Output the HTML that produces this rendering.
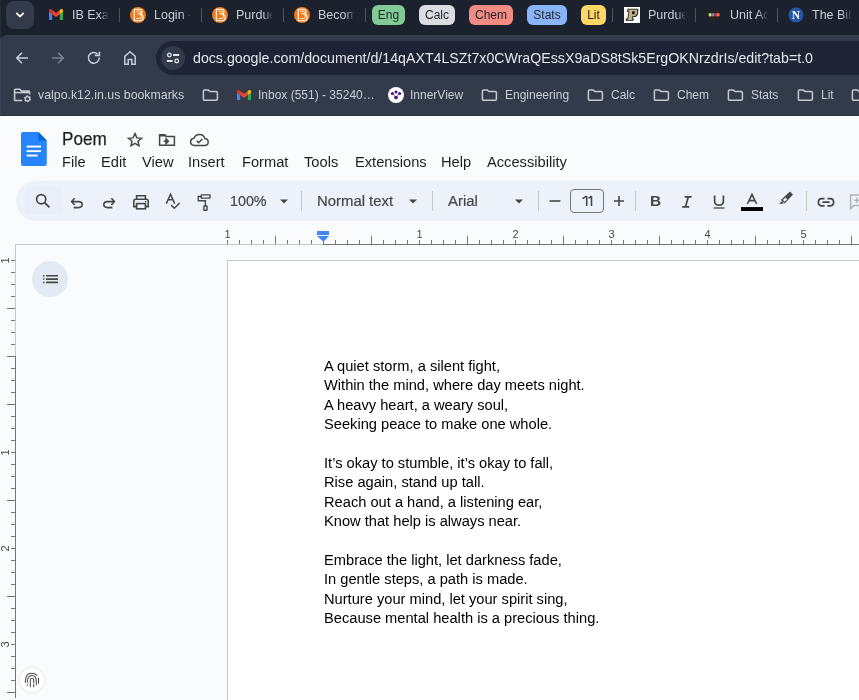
<!DOCTYPE html>
<html><head><meta charset="utf-8">
<style>
*{margin:0;padding:0;box-sizing:border-box}
html,body{width:859px;height:700px;overflow:hidden;background:#f9fbfd;font-family:"Liberation Sans",sans-serif}
.a{position:absolute}
#root{position:absolute;left:0;top:0;width:859px;height:700px;will-change:transform}
.tt{position:absolute;top:7px;height:18px;font-size:12.5px;color:#c9cdd6;white-space:nowrap;overflow:hidden;line-height:16px;
 -webkit-mask-image:linear-gradient(to right,#000 74%,transparent 100%)}
.sep{position:absolute;top:8px;width:1px;height:14px;background:#4b5262}
.chip{position:absolute;top:5px;height:20px;border-radius:6px;font-size:12px;line-height:20px;color:#1f232b;text-align:center}
.bm{position:absolute;top:88px;font-size:12px;color:#c9cdd6;white-space:nowrap;line-height:14px}
.menu{position:absolute;top:154px;font-size:14.67px;color:#1f1f1f;white-space:nowrap;line-height:17px}
.pl{position:absolute;left:324px;font-size:14.67px;color:#000;white-space:nowrap;line-height:19.38px}
.ic{position:absolute}
</style></head><body><div id="root">

<div class="a" style="left:0;top:0;width:859px;height:44px;background:#1b212d"></div>
<div class="a" style="left:0;top:0;width:1px;height:38px;background:#262c38;z-index:1"></div>
<div class="a" style="left:0;top:38px;width:1px;height:77px;background:#3a4150;z-index:1"></div>
<div class="a" style="left:0;top:35px;width:859px;height:81px;background:#333a4a;border-top-left-radius:7px"></div>
<div class="a" style="left:0;top:115px;width:859px;height:1px;background:#2d323e"></div>
<div class="a" style="left:0;top:116px;width:859px;height:1px;background:#ffffff"></div>
<div class="a" style="left:6px;top:1px;width:28px;height:28px;border-radius:8px;background:#333a4a"></div>
<svg class="ic" style="left:14px;top:9px" width="12" height="12" viewBox="0 0 12 12"><path d="M2.3 3.9 L6 7.6 L9.7 3.9" stroke="#fff" stroke-width="1.7" fill="none"/></svg>
<svg class="ic" style="left:49px;top:9px" width="14" height="11" viewBox="0 0 256 193" preserveAspectRatio="none">
<path fill="#4285f4" d="M58.182 192.05V93.14L27.507 65.077 0 49.504v125.091c0 9.658 7.825 17.455 17.455 17.455z"/>
<path fill="#34a853" d="M197.818 192.05h40.727c9.659 0 17.455-7.826 17.455-17.455V49.505l-31.156 17.837-27.026 25.798z"/>
<path fill="#ea4335" d="m58.182 93.14-4.174-38.647 4.174-36.989L128 69.868l69.818-52.364 4.669 34.992-4.669 40.644L128 145.504z"/>
<path fill="#fbbc04" d="M197.818 17.504V93.14L256 49.504V26.231c0-21.585-24.64-33.89-41.89-20.945z"/>
<path fill="#d93025" d="M0 49.504l26.759 20.07L58.182 93.14V17.504L41.89 5.286C24.61-7.66 0 4.646 0 26.23z"/>
</svg>
<svg class="ic" style="left:130px;top:7px" width="16" height="16" viewBox="0 0 16 16">
<circle cx="8" cy="8" r="8" fill="#f27a16"/>
<path d="M4.3 2.2 H9.8 Q12.1 2.2 12.1 4.6 Q12.1 6.4 10.8 7.2 Q13.2 8 13.2 10.6 Q13.2 13.7 10 13.7 H4.3 Z" fill="none" stroke="#fff" stroke-width="1.1"/>
<path d="M6.4 4.2 H9.3 Q10.5 4.2 10.5 5.3 Q10.5 6.5 9.1 6.8 M7.2 6.8 H9.6 Q11.4 7 11.4 9.2 Q11.4 11.6 9.6 11.6 H6.4" fill="none" stroke="#fff" stroke-width="0.9"/>
</svg>
<svg class="ic" style="left:212px;top:7px" width="16" height="16" viewBox="0 0 16 16">
<circle cx="8" cy="8" r="8" fill="#f27a16"/>
<path d="M4.3 2.2 H9.8 Q12.1 2.2 12.1 4.6 Q12.1 6.4 10.8 7.2 Q13.2 8 13.2 10.6 Q13.2 13.7 10 13.7 H4.3 Z" fill="none" stroke="#fff" stroke-width="1.1"/>
<path d="M6.4 4.2 H9.3 Q10.5 4.2 10.5 5.3 Q10.5 6.5 9.1 6.8 M7.2 6.8 H9.6 Q11.4 7 11.4 9.2 Q11.4 11.6 9.6 11.6 H6.4" fill="none" stroke="#fff" stroke-width="0.9"/>
</svg>
<svg class="ic" style="left:294px;top:7px" width="16" height="16" viewBox="0 0 16 16">
<circle cx="8" cy="8" r="8" fill="#f27a16"/>
<path d="M4.3 2.2 H9.8 Q12.1 2.2 12.1 4.6 Q12.1 6.4 10.8 7.2 Q13.2 8 13.2 10.6 Q13.2 13.7 10 13.7 H4.3 Z" fill="none" stroke="#fff" stroke-width="1.1"/>
<path d="M6.4 4.2 H9.3 Q10.5 4.2 10.5 5.3 Q10.5 6.5 9.1 6.8 M7.2 6.8 H9.6 Q11.4 7 11.4 9.2 Q11.4 11.6 9.6 11.6 H6.4" fill="none" stroke="#fff" stroke-width="0.9"/>
</svg>
<div class="tt" style="left:72px;width:37px">IB Exam Prep</div>
<div class="tt" style="left:154px;width:37px">Login - Brightspace</div>
<div class="tt" style="left:236px;width:37px">Purdue Brightspace</div>
<div class="tt" style="left:318px;width:37px">Become a Leader</div>
<div class="sep" style="left:119px"></div>
<div class="sep" style="left:201px"></div>
<div class="sep" style="left:283px"></div>
<div class="sep" style="left:365px"></div>
<div class="chip" style="left:372px;width:33px;background:#81c995">Eng</div>
<div class="chip" style="left:419px;width:36px;background:#dadce0">Calc</div>
<div class="chip" style="left:469px;width:44px;background:#f28b82">Chem</div>
<div class="chip" style="left:527px;width:40px;background:#8ab4f8">Stats</div>
<div class="chip" style="left:581px;width:25px;background:#fdd663">Lit</div>
<div class="sep" style="left:612px"></div>
<svg class="ic" style="left:624px;top:7px" width="16" height="16" viewBox="0 0 16 16">
<rect width="16" height="16" fill="#fff"/>
<path d="M3.6 1.8 H13.2 Q14.6 1.8 14.4 3.6 L13.8 7 Q13.4 9.8 10.6 10 H9 L8.6 11.6 H9.8 L9.4 13.8 H1.6 L2 11.6 H3.4 L4.6 5 H3 Z" fill="#111"/>
<path d="M4.4 2.6 H12.6 Q13.6 2.6 13.4 3.8 L13 6.6 Q12.6 9 10.2 9.2 H8.4 L7.8 12.4 H8.8 L8.6 13 H2.6 L2.8 12.4 H4 L5.4 4.4 H4.2 Z" fill="#c4b285"/>
<path d="M8.4 4.2 H10.8 L10.4 7.2 H7.9 Z" fill="#111"/>
</svg>
<div class="tt" style="left:648px;width:38px">Purdue</div>
<div class="sep" style="left:695px"></div>
<svg class="ic" style="left:706px;top:7px" width="16" height="16" viewBox="0 0 16 16">
<circle cx="8" cy="8" r="6" fill="#2a2220"/>
<rect x="2.7" y="6.3" width="2.7" height="3" fill="#d6f23a"/>
<rect x="5.4" y="6.3" width="2.7" height="3" fill="#27a9e6"/>
<rect x="8.1" y="6.3" width="2.7" height="3" fill="#ee1777"/>
<rect x="10.8" y="6.3" width="2.6" height="3" fill="#fb8b2b"/>
</svg>
<div class="tt" style="left:730px;width:38px">Unit Activity</div>
<div class="sep" style="left:777px"></div>
<svg class="ic" style="left:788px;top:7px" width="16" height="16" viewBox="0 0 16 16">
<circle cx="8" cy="8" r="7.6" fill="#2356a6"/>
<text x="8" y="12.1" font-family="Liberation Serif" font-weight="bold" font-size="11.5" fill="#fff" text-anchor="middle">N</text>
</svg>
<div class="tt" style="left:812px;width:40px">The Bible</div>
<svg class="ic" style="left:14px;top:50px" width="16" height="16" viewBox="0 0 16 16">
<path d="M14 8 H3.4 M8 2.8 L2.8 8 L8 13.2" stroke="#c3ccdd" stroke-width="1.6" fill="none"/></svg>
<svg class="ic" style="left:50px;top:50px" width="16" height="16" viewBox="0 0 16 16">
<path d="M2 8 H12.6 M8 2.8 L13.2 8 L8 13.2" stroke="#7c8494" stroke-width="1.6" fill="none"/></svg>
<svg class="ic" style="left:86px;top:50px" width="16" height="16" viewBox="0 0 16 16">
<path d="M13.2 7.6 A5.4 5.4 0 1 1 11.6 4" stroke="#c3ccdd" stroke-width="1.6" fill="none"/>
<path d="M8.8 5.4 H13.4 V1.8" stroke="#c3ccdd" stroke-width="1.6" fill="none"/></svg>
<svg class="ic" style="left:122px;top:50px" width="16" height="16" viewBox="0 0 16 16">
<path d="M2.8 14.2 V6.4 L8 1.8 L13.2 6.4 V14.2 H9.8 V9.6 H6.2 V14.2 Z" stroke="#c3ccdd" stroke-width="1.5" fill="none" stroke-linejoin="miter"/></svg>
<div class="a" style="left:156px;top:41px;width:760px;height:34px;border-radius:17px;background:#1e2434"></div>
<div class="a" style="left:161px;top:46px;width:24px;height:24px;border-radius:12px;background:#333a4a"></div>
<svg class="ic" style="left:165px;top:50px" width="16" height="16" viewBox="0 0 16 16">
<circle cx="4.4" cy="5" r="1.8" stroke="#e3e6ec" stroke-width="1.3" fill="none"/>
<path d="M8 5 H14.2 M1.8 11 H7.6" stroke="#e3e6ec" stroke-width="1.8"/>
<circle cx="11.7" cy="11" r="1.8" stroke="#e3e6ec" stroke-width="1.3" fill="none"/></svg>
<div class="a" style="left:193px;top:49px;font-size:14.19px;color:#e3e6ec;white-space:nowrap;line-height:18px">docs.google.com/document/d/14qAXT4LSZt7x0CWraQEssX9aDS8tSk5ErgOKNrzdrIs/edit?tab=t.0</div>
<svg class="ic" style="left:13px;top:88px" width="20" height="16" viewBox="0 0 20 16">
<path d="M9.2 12.5 H2.3 Q1.6 12.5 1.6 11.8 V1.9 Q1.6 1.2 2.3 1.2 H6.8 L8.6 3.1 H15.6 Q16.6 3.1 16.6 4.1 V6.4" stroke="#c7cad1" stroke-width="1.6" fill="none"/><path d="M1.6 4.6 H16.6" stroke="#c7cad1" stroke-width="1.5"/>
<circle cx="14.5" cy="10.8" r="2.6" stroke="#c7cad1" stroke-width="1.7" fill="none" stroke-dasharray="1.6 1.12"/>
<circle cx="14.5" cy="10.8" r="2.2" stroke="#c7cad1" stroke-width="1.2" fill="none"/>
</svg>
<svg class="ic" style="left:201.5px;top:88.5px" width="17" height="13" viewBox="0 0 17 13">
<path d="M1.4 2.1 Q1.4 0.9 2.7 0.9 H6.3 L7.9 2.5 H14.1 Q15.4 2.5 15.4 3.8 V10 Q15.4 11.3 14.1 11.3 H2.7 Q1.4 11.3 1.4 10 Z" stroke="#c7cad1" stroke-width="1.5" fill="none"/></svg>
<svg class="ic" style="left:237px;top:89.5px" width="14" height="10.5" viewBox="0 0 256 193" preserveAspectRatio="none">
<path fill="#4285f4" d="M58.182 192.05V93.14L27.507 65.077 0 49.504v125.091c0 9.658 7.825 17.455 17.455 17.455z"/>
<path fill="#34a853" d="M197.818 192.05h40.727c9.659 0 17.455-7.826 17.455-17.455V49.505l-31.156 17.837-27.026 25.798z"/>
<path fill="#ea4335" d="m58.182 93.14-4.174-38.647 4.174-36.989L128 69.868l69.818-52.364 4.669 34.992-4.669 40.644L128 145.504z"/>
<path fill="#fbbc04" d="M197.818 17.504V93.14L256 49.504V26.231c0-21.585-24.64-33.89-41.89-20.945z"/>
<path fill="#d93025" d="M0 49.504l26.759 20.07L58.182 93.14V17.504L41.89 5.286C24.61-7.66 0 4.646 0 26.23z"/>
</svg>
<svg class="ic" style="left:388px;top:87px" width="16" height="16" viewBox="0 0 16 16">
<circle cx="8" cy="8" r="8" fill="#fff"/>
<circle cx="8" cy="5" r="1.5" fill="#4b0f8c"/>
<circle cx="4.4" cy="6.5" r="1.5" fill="#4b0f8c"/>
<circle cx="11.6" cy="6.5" r="1.5" fill="#4b0f8c"/>
<path d="M4.4 6.5 L8 10.5 L11.6 6.5" stroke="#6a2aa8" stroke-width="0.8" fill="none"/>
<circle cx="8" cy="10.6" r="1.8" fill="#4b0f8c"/>
</svg>
<svg class="ic" style="left:480.5px;top:88.5px" width="17" height="13" viewBox="0 0 17 13">
<path d="M1.4 2.1 Q1.4 0.9 2.7 0.9 H6.3 L7.9 2.5 H14.1 Q15.4 2.5 15.4 3.8 V10 Q15.4 11.3 14.1 11.3 H2.7 Q1.4 11.3 1.4 10 Z" stroke="#c7cad1" stroke-width="1.5" fill="none"/></svg>
<svg class="ic" style="left:586.5px;top:88.5px" width="17" height="13" viewBox="0 0 17 13">
<path d="M1.4 2.1 Q1.4 0.9 2.7 0.9 H6.3 L7.9 2.5 H14.1 Q15.4 2.5 15.4 3.8 V10 Q15.4 11.3 14.1 11.3 H2.7 Q1.4 11.3 1.4 10 Z" stroke="#c7cad1" stroke-width="1.5" fill="none"/></svg>
<svg class="ic" style="left:652.5px;top:88.5px" width="17" height="13" viewBox="0 0 17 13">
<path d="M1.4 2.1 Q1.4 0.9 2.7 0.9 H6.3 L7.9 2.5 H14.1 Q15.4 2.5 15.4 3.8 V10 Q15.4 11.3 14.1 11.3 H2.7 Q1.4 11.3 1.4 10 Z" stroke="#c7cad1" stroke-width="1.5" fill="none"/></svg>
<svg class="ic" style="left:726.5px;top:88.5px" width="17" height="13" viewBox="0 0 17 13">
<path d="M1.4 2.1 Q1.4 0.9 2.7 0.9 H6.3 L7.9 2.5 H14.1 Q15.4 2.5 15.4 3.8 V10 Q15.4 11.3 14.1 11.3 H2.7 Q1.4 11.3 1.4 10 Z" stroke="#c7cad1" stroke-width="1.5" fill="none"/></svg>
<svg class="ic" style="left:796.5px;top:88.5px" width="17" height="13" viewBox="0 0 17 13">
<path d="M1.4 2.1 Q1.4 0.9 2.7 0.9 H6.3 L7.9 2.5 H14.1 Q15.4 2.5 15.4 3.8 V10 Q15.4 11.3 14.1 11.3 H2.7 Q1.4 11.3 1.4 10 Z" stroke="#c7cad1" stroke-width="1.5" fill="none"/></svg>
<svg class="ic" style="left:850.5px;top:88.5px" width="17" height="13" viewBox="0 0 17 13">
<path d="M1.4 2.1 Q1.4 0.9 2.7 0.9 H6.3 L7.9 2.5 H14.1 Q15.4 2.5 15.4 3.8 V10 Q15.4 11.3 14.1 11.3 H2.7 Q1.4 11.3 1.4 10 Z" stroke="#c7cad1" stroke-width="1.5" fill="none"/></svg>
<div class="bm" style="left:38px;font-size:12.35px;">valpo.k12.in.us bookmarks</div>
<div class="bm" style="left:258px;">Inbox (551) - 35240…</div>
<div class="bm" style="left:410px;">InnerView</div>
<div class="bm" style="left:505px;">Engineering</div>
<div class="bm" style="left:611px;">Calc</div>
<div class="bm" style="left:677px;">Chem</div>
<div class="bm" style="left:751px;">Stats</div>
<div class="bm" style="left:821px;">Lit</div>
<svg class="ic" style="left:21px;top:132px" width="26" height="34" viewBox="0 0 26 34">
<path d="M2.2 0 H17.4 L25.8 8.4 V31.8 Q25.8 34 23.6 34 H2.2 Q0 34 0 31.8 V2.2 Q0 0 2.2 0 Z" fill="#2684fc"/>
<path d="M17.4 0 L25.8 8.4 H17.4 Z" fill="#0066da"/>
<rect x="5.6" y="13.6" width="14.4" height="1.9" fill="#fff"/>
<rect x="5.6" y="18.2" width="14.4" height="1.9" fill="#fff"/>
<rect x="5.6" y="22.6" width="11" height="1.9" fill="#fff"/>
</svg>
<div class="a" style="left:62px;top:128px;font-size:19px;color:#1f1f1f;-webkit-text-stroke:0.25px #1f1f1f;white-space:nowrap;line-height:22px;transform:scaleX(0.9);transform-origin:0 0">Poem</div>
<svg class="ic" style="left:125px;top:130px" width="20" height="20" viewBox="0 0 20 20">
<path d="M10 3.6 L11.9 7.9 L16.5 8.3 L13 11.3 L14 15.8 L10 13.4 L6 15.8 L7 11.3 L3.5 8.3 L8.1 7.9 Z" stroke="#444746" stroke-width="1.5" fill="none" stroke-linejoin="miter"/></svg>
<svg class="ic" style="left:157px;top:131px" width="20" height="18" viewBox="0 0 20 18">
<path d="M2.6 3.8 V14.2 H17.4 V5.6 H9.6 L7.8 3.8 Z" stroke="#444746" stroke-width="1.5" fill="none"/>
<path d="M2.6 4 H7.8 L9.6 5.6 H2.6 Z" fill="#444746"/>
<path d="M6.6 10.2 H10.6 M9 7.8 L11.4 10.2 L9 12.6 Z" stroke="#444746" stroke-width="1.5" fill="#444746"/></svg>
<svg class="ic" style="left:189px;top:130px" width="21" height="18" viewBox="0 0 21 18">
<path d="M5.6 15.4 Q1.6 15.4 1.6 11.8 Q1.6 8.6 5 8.2 Q6.4 4.4 10.6 4.4 Q15 4.4 15.8 8.6 Q19.2 8.8 19.2 12 Q19.2 15.4 15.6 15.4 Z" stroke="#444746" stroke-width="1.5" fill="none"/>
<path d="M7.6 10.8 L9.6 12.8 L13.4 9" stroke="#444746" stroke-width="1.5" fill="none"/></svg>
<div class="menu" style="left:62px">File</div>
<div class="menu" style="left:101px">Edit</div>
<div class="menu" style="left:142px">View</div>
<div class="menu" style="left:188px">Insert</div>
<div class="menu" style="left:242px">Format</div>
<div class="menu" style="left:304px">Tools</div>
<div class="menu" style="left:355px">Extensions</div>
<div class="menu" style="left:441px">Help</div>
<div class="menu" style="left:487px">Accessibility</div>
<div class="a" style="left:16px;top:181px;width:900px;height:40px;border-radius:20px;background:#edf2fa"></div>
<div class="a" style="left:25px;top:187px;width:37px;height:28px;border-radius:4px;background:#e9eef8"></div>
<svg class="ic" style="left:33px;top:191px" width="20" height="20" viewBox="0 0 20 20">
<circle cx="8.2" cy="8.2" r="4.6" stroke="#444746" stroke-width="1.7" fill="none"/>
<path d="M11.6 11.6 L16.4 16.4" stroke="#444746" stroke-width="1.8"/></svg>
<svg class="ic" style="left:67px;top:192px" width="20" height="20" viewBox="0 0 20 20">
<path d="M5.2 9.6 H11.4 Q15.2 9.6 15.2 12.6 Q15.2 15.6 11.4 15.6 H6.6" stroke="#444746" stroke-width="1.6" fill="none"/>
<path d="M7.6 6.2 L4.6 9.6 L7.6 13" stroke="#444746" stroke-width="1.6" fill="none"/></svg>
<svg class="ic" style="left:99px;top:192px" width="20" height="20" viewBox="0 0 20 20">
<path d="M14.8 9.6 H8.6 Q4.8 9.6 4.8 12.6 Q4.8 15.6 8.6 15.6 H13.4" stroke="#444746" stroke-width="1.6" fill="none"/>
<path d="M12.4 6.2 L15.4 9.6 L12.4 13" stroke="#444746" stroke-width="1.6" fill="none"/></svg>
<svg class="ic" style="left:131px;top:192px" width="20" height="20" viewBox="0 0 20 20">
<path d="M5.6 7 V3.8 H14.4 V7" stroke="#444746" stroke-width="1.6" fill="none"/>
<path d="M5.4 14.6 H2.8 V9.2 Q2.8 7.2 4.8 7.2 H15.2 Q17.2 7.2 17.2 9.2 V14.6 H14.6" stroke="#444746" stroke-width="1.6" fill="none"/>
<rect x="5.6" y="11.6" width="8.8" height="5.2" stroke="#444746" stroke-width="1.6" fill="none"/>
<circle cx="14.6" cy="9.8" r="0.8" fill="#444746"/></svg>
<svg class="ic" style="left:163px;top:191px" width="20" height="20" viewBox="0 0 20 20">
<path d="M3.3 12.6 L7.5 3.3 L11.7 12.6 M5.1 8.8 H9.9" stroke="#444746" stroke-width="1.5" fill="none"/>
<path d="M8.1 14.1 L11.4 17.3 L16.6 12" stroke="#444746" stroke-width="1.5" fill="none"/></svg>
<svg class="ic" style="left:194px;top:191px" width="20" height="20" viewBox="0 0 20 20">
<rect x="7.2" y="3.9" width="8.8" height="3.2" rx="0.4" stroke="#444746" stroke-width="1.4" fill="none"/>
<path d="M7.2 5.5 H4.25 V9.7 H11.4 V15" stroke="#444746" stroke-width="1.4" fill="none"/>
<rect x="9.9" y="15" width="3.1" height="4.2" rx="0.2" stroke="#444746" stroke-width="1.4" fill="none"/></svg>
<div class="a" style="left:230px;top:193px;font-size:14.3px;color:#444746;line-height:16px;-webkit-text-stroke:0.2px #444746">100%</div>
<svg class="ic" style="left:279px;top:199px" width="10" height="6" viewBox="0 0 10 6"><path d="M1 0.5 H9 L5 4.6 Z" fill="#444746"/></svg>
<div class="a" style="left:301px;top:191px;width:1px;height:20px;background:#c7c7c7"></div>
<div class="a" style="left:317px;top:193px;font-size:14.9px;color:#444746;line-height:16px;white-space:nowrap;-webkit-text-stroke:0.2px #444746">Normal text</div>
<svg class="ic" style="left:408px;top:199px" width="10" height="6" viewBox="0 0 10 6"><path d="M1 0.5 H9 L5 4.6 Z" fill="#444746"/></svg>
<div class="a" style="left:432px;top:191px;width:1px;height:20px;background:#c7c7c7"></div>
<div class="a" style="left:448px;top:193px;font-size:14.9px;color:#444746;line-height:16px;-webkit-text-stroke:0.2px #444746">Arial</div>
<svg class="ic" style="left:514px;top:199px" width="10" height="6" viewBox="0 0 10 6"><path d="M1 0.5 H9 L5 4.6 Z" fill="#444746"/></svg>
<div class="a" style="left:538px;top:191px;width:1px;height:20px;background:#c7c7c7"></div>
<svg class="ic" style="left:548px;top:196px" width="14" height="10" viewBox="0 0 14 10"><path d="M1.6 5 H12.4" stroke="#444746" stroke-width="1.6"/></svg>
<div class="a" style="left:570px;top:189px;width:34px;height:24px;border:1px solid #747775;border-radius:4px"></div>
<svg class="ic" style="left:578px;top:193px" width="18" height="16" viewBox="578 193 18 16">
<path d="M586.7 196 V205.9 M582.4 198.6 L586.5 196.2" stroke="#444746" stroke-width="1.55" fill="none"/>
<path d="M591.5 196 V205.9 M588.6 198.3 L591.4 196.2" stroke="#444746" stroke-width="1.55" fill="none"/></svg>
<svg class="ic" style="left:612px;top:194px" width="14" height="14" viewBox="0 0 14 14"><path d="M2 7 H12 M7 2 V12" stroke="#444746" stroke-width="1.6"/></svg>
<div class="a" style="left:635px;top:191px;width:1px;height:20px;background:#c7c7c7"></div>
<div class="a" style="left:650px;top:192px;font-size:15.4px;font-weight:bold;color:#444746;line-height:17px">B</div>
<svg class="ic" style="left:677px;top:191px" width="20" height="20" viewBox="0 0 20 20">
<path d="M7.6 5.8 H14.6 M5.2 15.8 H12.2 M11.4 5.8 L8.4 15.8" stroke="#444746" stroke-width="1.7" fill="none"/></svg>
<svg class="ic" style="left:709px;top:191px" width="20" height="20" viewBox="0 0 20 20">
<path d="M5.6 4.6 V10 Q5.6 14.2 10 14.2 Q14.4 14.2 14.4 10 V4.6" stroke="#444746" stroke-width="1.7" fill="none"/>
<path d="M4.6 17 H15.4" stroke="#444746" stroke-width="1.3"/></svg>
<svg class="ic" style="left:742px;top:191px" width="20" height="20" viewBox="0 0 20 20">
<path d="M5.4 13 L10 3.4 L14.6 13 M7 9.6 H13" stroke="#444746" stroke-width="1.6" fill="none"/></svg>
<div class="a" style="left:741px;top:207px;width:22px;height:4px;background:#000"></div>
<svg class="ic" style="left:772px;top:186px" width="28" height="28" viewBox="0 0 28 28">
<path d="M17.4 5.9 Q17.9 5.5 18.4 5.9 L20.6 8.1 Q21.1 8.6 20.6 9.1 L12.6 17.6 L8.9 13.9 Z" fill="#444746"/>
<path d="M10.9 14 L12.7 15.8 L15.2 13.3 L13.4 11.5 Z" fill="#edf2fa"/>
<path d="M7 17.8 L9.6 15.2 L11.6 17.2 L11 17.8 Z" fill="#444746"/></svg>
<div class="a" style="left:806px;top:191px;width:1px;height:20px;background:#c7c7c7"></div>
<svg class="ic" style="left:816px;top:193px" width="20" height="18" viewBox="0 0 20 18">
<path d="M8.6 5.6 H6 Q2.4 5.6 2.4 9.2 Q2.4 12.8 6 12.8 H8.6 M11.4 5.6 H14 Q17.6 5.6 17.6 9.2 Q17.6 12.8 14 12.8 H11.4 M6.4 9.2 H13.6" stroke="#444746" stroke-width="1.7" fill="none"/></svg>
<svg class="ic" style="left:849px;top:193px" width="16" height="18" viewBox="0 0 16 18">
<path d="M1.6 2 H14 V12.4 H4.8 L1.6 15.6 Z" stroke="#b0b3b8" stroke-width="1.5" fill="none"/>
<path d="M7.8 4.6 V10 M5.2 7.3 H10.4" stroke="#b0b3b8" stroke-width="1.4"/></svg>
<svg class="ic" style="left:0;top:224px" width="859" height="40" viewBox="0 224 859 40"><rect x="15" y="244" width="308" height="1" fill="#c4c7c5"/><rect x="323" y="244" width="536" height="1" fill="#747775"/><rect x="239" y="240" width="1" height="4" fill="#747775"/><rect x="251" y="240" width="1" height="4" fill="#747775"/><rect x="263" y="240" width="1" height="4" fill="#747775"/><rect x="275" y="236" width="1" height="8" fill="#747775"/><rect x="287" y="240" width="1" height="4" fill="#747775"/><rect x="299" y="240" width="1" height="4" fill="#747775"/><rect x="311" y="240" width="1" height="4" fill="#747775"/><rect x="323" y="240" width="1" height="4" fill="#747775"/><rect x="335" y="240" width="1" height="4" fill="#747775"/><rect x="347" y="240" width="1" height="4" fill="#747775"/><rect x="359" y="240" width="1" height="4" fill="#747775"/><rect x="371" y="236" width="1" height="8" fill="#747775"/><rect x="383" y="240" width="1" height="4" fill="#747775"/><rect x="395" y="240" width="1" height="4" fill="#747775"/><rect x="407" y="240" width="1" height="4" fill="#747775"/><rect x="431" y="240" width="1" height="4" fill="#747775"/><rect x="443" y="240" width="1" height="4" fill="#747775"/><rect x="455" y="240" width="1" height="4" fill="#747775"/><rect x="467" y="236" width="1" height="8" fill="#747775"/><rect x="479" y="240" width="1" height="4" fill="#747775"/><rect x="491" y="240" width="1" height="4" fill="#747775"/><rect x="503" y="240" width="1" height="4" fill="#747775"/><rect x="527" y="240" width="1" height="4" fill="#747775"/><rect x="539" y="240" width="1" height="4" fill="#747775"/><rect x="551" y="240" width="1" height="4" fill="#747775"/><rect x="563" y="236" width="1" height="8" fill="#747775"/><rect x="575" y="240" width="1" height="4" fill="#747775"/><rect x="587" y="240" width="1" height="4" fill="#747775"/><rect x="599" y="240" width="1" height="4" fill="#747775"/><rect x="623" y="240" width="1" height="4" fill="#747775"/><rect x="635" y="240" width="1" height="4" fill="#747775"/><rect x="647" y="240" width="1" height="4" fill="#747775"/><rect x="659" y="236" width="1" height="8" fill="#747775"/><rect x="671" y="240" width="1" height="4" fill="#747775"/><rect x="683" y="240" width="1" height="4" fill="#747775"/><rect x="695" y="240" width="1" height="4" fill="#747775"/><rect x="719" y="240" width="1" height="4" fill="#747775"/><rect x="731" y="240" width="1" height="4" fill="#747775"/><rect x="743" y="240" width="1" height="4" fill="#747775"/><rect x="755" y="236" width="1" height="8" fill="#747775"/><rect x="767" y="240" width="1" height="4" fill="#747775"/><rect x="779" y="240" width="1" height="4" fill="#747775"/><rect x="791" y="240" width="1" height="4" fill="#747775"/><rect x="815" y="240" width="1" height="4" fill="#747775"/><rect x="827" y="240" width="1" height="4" fill="#747775"/><rect x="839" y="240" width="1" height="4" fill="#747775"/><rect x="851" y="236" width="1" height="8" fill="#747775"/><rect x="227" y="240" width="1" height="4" fill="#747775"/><text x="227.5" y="238" font-family="Liberation Sans" font-size="11" fill="#474747" text-anchor="middle">1</text><rect x="419" y="240" width="1" height="4" fill="#747775"/><text x="419.5" y="238" font-family="Liberation Sans" font-size="11" fill="#474747" text-anchor="middle">1</text><rect x="515" y="240" width="1" height="4" fill="#747775"/><text x="515.5" y="238" font-family="Liberation Sans" font-size="11" fill="#474747" text-anchor="middle">2</text><rect x="611" y="240" width="1" height="4" fill="#747775"/><text x="611.5" y="238" font-family="Liberation Sans" font-size="11" fill="#474747" text-anchor="middle">3</text><rect x="707" y="240" width="1" height="4" fill="#747775"/><text x="707.5" y="238" font-family="Liberation Sans" font-size="11" fill="#474747" text-anchor="middle">4</text><rect x="803" y="240" width="1" height="4" fill="#747775"/><text x="803.5" y="238" font-family="Liberation Sans" font-size="11" fill="#474747" text-anchor="middle">5</text></svg>
<svg class="ic" style="left:316px;top:230px" width="14" height="13" viewBox="0 0 14 13">
<rect x="1" y="1" width="12" height="4" fill="#4285f4"/>
<path d="M1 6 H13 L7.5 11.8 Z" fill="#4285f4"/></svg>
<svg class="ic" style="left:0;top:244px" width="20" height="456" viewBox="0 244 20 456"><rect x="15" y="244" width="1" height="112" fill="#c4c7c5"/><rect x="15" y="356" width="1" height="342" fill="#747775"/><rect x="11" y="260" width="4" height="1" fill="#747775"/><text x="0" y="0" transform="translate(8.6 260.5) rotate(-90)" font-family="Liberation Sans" font-size="11" fill="#474747" text-anchor="middle">1</text><rect x="11" y="272" width="4" height="1" fill="#747775"/><rect x="11" y="284" width="4" height="1" fill="#747775"/><rect x="11" y="296" width="4" height="1" fill="#747775"/><rect x="7" y="308" width="8" height="1" fill="#747775"/><rect x="11" y="320" width="4" height="1" fill="#747775"/><rect x="11" y="332" width="4" height="1" fill="#747775"/><rect x="11" y="344" width="4" height="1" fill="#747775"/><rect x="7" y="356" width="8" height="1" fill="#747775"/><rect x="11" y="368" width="4" height="1" fill="#747775"/><rect x="11" y="380" width="4" height="1" fill="#747775"/><rect x="11" y="392" width="4" height="1" fill="#747775"/><rect x="7" y="404" width="8" height="1" fill="#747775"/><rect x="11" y="416" width="4" height="1" fill="#747775"/><rect x="11" y="428" width="4" height="1" fill="#747775"/><rect x="11" y="440" width="4" height="1" fill="#747775"/><rect x="11" y="452" width="4" height="1" fill="#747775"/><text x="0" y="0" transform="translate(8.6 452.5) rotate(-90)" font-family="Liberation Sans" font-size="11" fill="#474747" text-anchor="middle">1</text><rect x="11" y="464" width="4" height="1" fill="#747775"/><rect x="11" y="476" width="4" height="1" fill="#747775"/><rect x="11" y="488" width="4" height="1" fill="#747775"/><rect x="7" y="500" width="8" height="1" fill="#747775"/><rect x="11" y="512" width="4" height="1" fill="#747775"/><rect x="11" y="524" width="4" height="1" fill="#747775"/><rect x="11" y="536" width="4" height="1" fill="#747775"/><rect x="11" y="548" width="4" height="1" fill="#747775"/><text x="0" y="0" transform="translate(8.6 548.5) rotate(-90)" font-family="Liberation Sans" font-size="11" fill="#474747" text-anchor="middle">2</text><rect x="11" y="560" width="4" height="1" fill="#747775"/><rect x="11" y="572" width="4" height="1" fill="#747775"/><rect x="11" y="584" width="4" height="1" fill="#747775"/><rect x="7" y="596" width="8" height="1" fill="#747775"/><rect x="11" y="608" width="4" height="1" fill="#747775"/><rect x="11" y="620" width="4" height="1" fill="#747775"/><rect x="11" y="632" width="4" height="1" fill="#747775"/><rect x="11" y="644" width="4" height="1" fill="#747775"/><text x="0" y="0" transform="translate(8.6 644.5) rotate(-90)" font-family="Liberation Sans" font-size="11" fill="#474747" text-anchor="middle">3</text><rect x="11" y="656" width="4" height="1" fill="#747775"/><rect x="11" y="668" width="4" height="1" fill="#747775"/><rect x="11" y="680" width="4" height="1" fill="#747775"/><rect x="7" y="692" width="8" height="1" fill="#747775"/></svg>
<div class="a" style="left:32px;top:261px;width:36px;height:36px;border-radius:18px;background:#e4eaf3"></div>
<svg class="ic" style="left:40px;top:269px" width="20" height="20" viewBox="0 0 20 20">
<path d="M3 6.8 H4.5 M3 10.1 H4.5 M3 13.4 H4.5" stroke="#444746" stroke-width="1.5"/>
<path d="M6.1 6.8 H18 M6.1 10.1 H18 M6.1 13.4 H18" stroke="#444746" stroke-width="1.6"/></svg>
<div class="a" style="left:227px;top:260px;width:700px;height:500px;background:#fff;border:1px solid #c7c7c7"></div>
<div class="a" style="left:20px;top:668px;width:24px;height:24px;border-radius:12px;background:#fff;box-shadow:0 0 3px rgba(0,0,0,0.14)"></div>
<svg class="ic" style="left:24px;top:672px" width="16" height="16" viewBox="0 0 16 16" fill="none" stroke="#474747" stroke-width="1.05" stroke-linecap="round">
<path d="M1.3 10.2 Q1.3 1.2 7.8 1.2 Q10.9 1.2 12.9 3.3"/>
<path d="M14.5 5.9 V11.2"/>
<path d="M3.3 10.6 Q3.3 3.5 8 3.5 Q12.3 3.5 12.3 9.8 V12.8"/>
<path d="M3.3 12.5 V13.3"/>
<path d="M6.3 14.8 V8.3 Q6.3 6.3 8 6.3 Q9.7 6.3 9.7 8.3 V10.8 M9.7 12.4 V14.8"/></svg>
<div class="pl" style="top:357.00px">A quiet storm, a silent fight,</div>
<div class="pl" style="top:376.38px">Within the mind, where day meets night.</div>
<div class="pl" style="top:395.76px">A heavy heart, a weary soul,</div>
<div class="pl" style="top:415.14px">Seeking peace to make one whole.</div>
<div class="pl" style="top:453.90px">It’s okay to stumble, it’s okay to fall,</div>
<div class="pl" style="top:473.28px">Rise again, stand up tall.</div>
<div class="pl" style="top:492.66px">Reach out a hand, a listening ear,</div>
<div class="pl" style="top:512.04px">Know that help is always near.</div>
<div class="pl" style="top:550.80px">Embrace the light, let darkness fade,</div>
<div class="pl" style="top:570.18px">In gentle steps, a path is made.</div>
<div class="pl" style="top:589.56px">Nurture your mind, let your spirit sing,</div>
<div class="pl" style="top:608.94px">Because mental health is a precious thing.</div>
</div></body></html>
